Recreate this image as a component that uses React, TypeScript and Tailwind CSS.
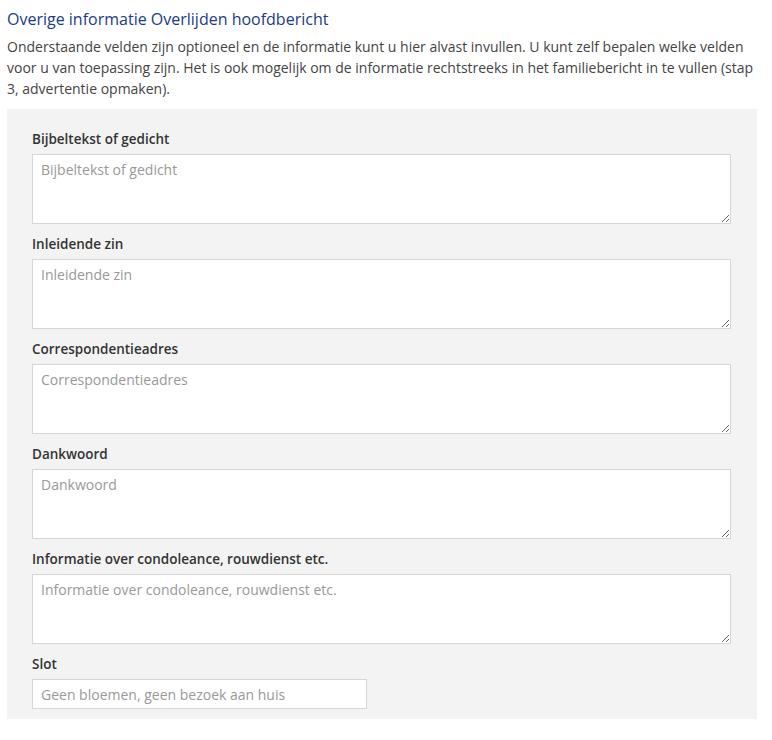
const fields = [
  "Bijbeltekst of gedicht",
  "Inleidende zin",
  "Correspondentieadres",
  "Dankwoord",
  "Informatie over condoleance, rouwdienst etc.",
];

function Label({ children }: { children: React.ReactNode }) {
  return <label className="block text-[13.5px] leading-5 font-semibold text-[#333]">{children}</label>;
}

export default function App() {
  return (
    <div className="w-[772px] bg-white px-[7px] pt-[8px] pb-[22px] font-['Open_Sans',sans-serif] text-[#444]">
      <h2 className="text-[16px] leading-[22px] font-normal text-[#213b86]">
        Overige informatie Overlijden hoofdbericht
      </h2>
      <p className="mt-[6px] text-[14px] leading-[21px] text-[#444]">
        Onderstaande velden zijn optioneel en de informatie kunt u hier alvast invullen. U kunt zelf bepalen welke velden
        voor u van toepassing zijn. Het is ook mogelijk om de informatie rechtstreeks in het familiebericht in te vullen (stap
        3, advertentie opmaken).
      </p>
      <div className="mt-[10px] w-[750px] bg-[#f3f3f3] pt-[20px] pr-[26px] pb-[10px] pl-[25px]">
        {fields.map((f) => (
          <div key={f} className="mb-[10px]">
            <Label>{f}</Label>
            <textarea
              placeholder={f}
              className="mt-[5px] block h-[70px] w-full resize-y border border-[#d6d6d6] bg-white px-[8px] py-[5px] text-[14px] leading-5 text-[#333] placeholder:text-[#999] outline-none"
            />
          </div>
        ))}
        <Label>Slot</Label>
        <input
          placeholder="Geen bloemen, geen bezoek aan huis"
          className="mt-[5px] block h-[30px] w-[335px] border border-[#d6d6d6] bg-white px-[8px] text-[14px] text-[#333] placeholder:text-[#999] outline-none"
        />
      </div>
    </div>
  );
}
